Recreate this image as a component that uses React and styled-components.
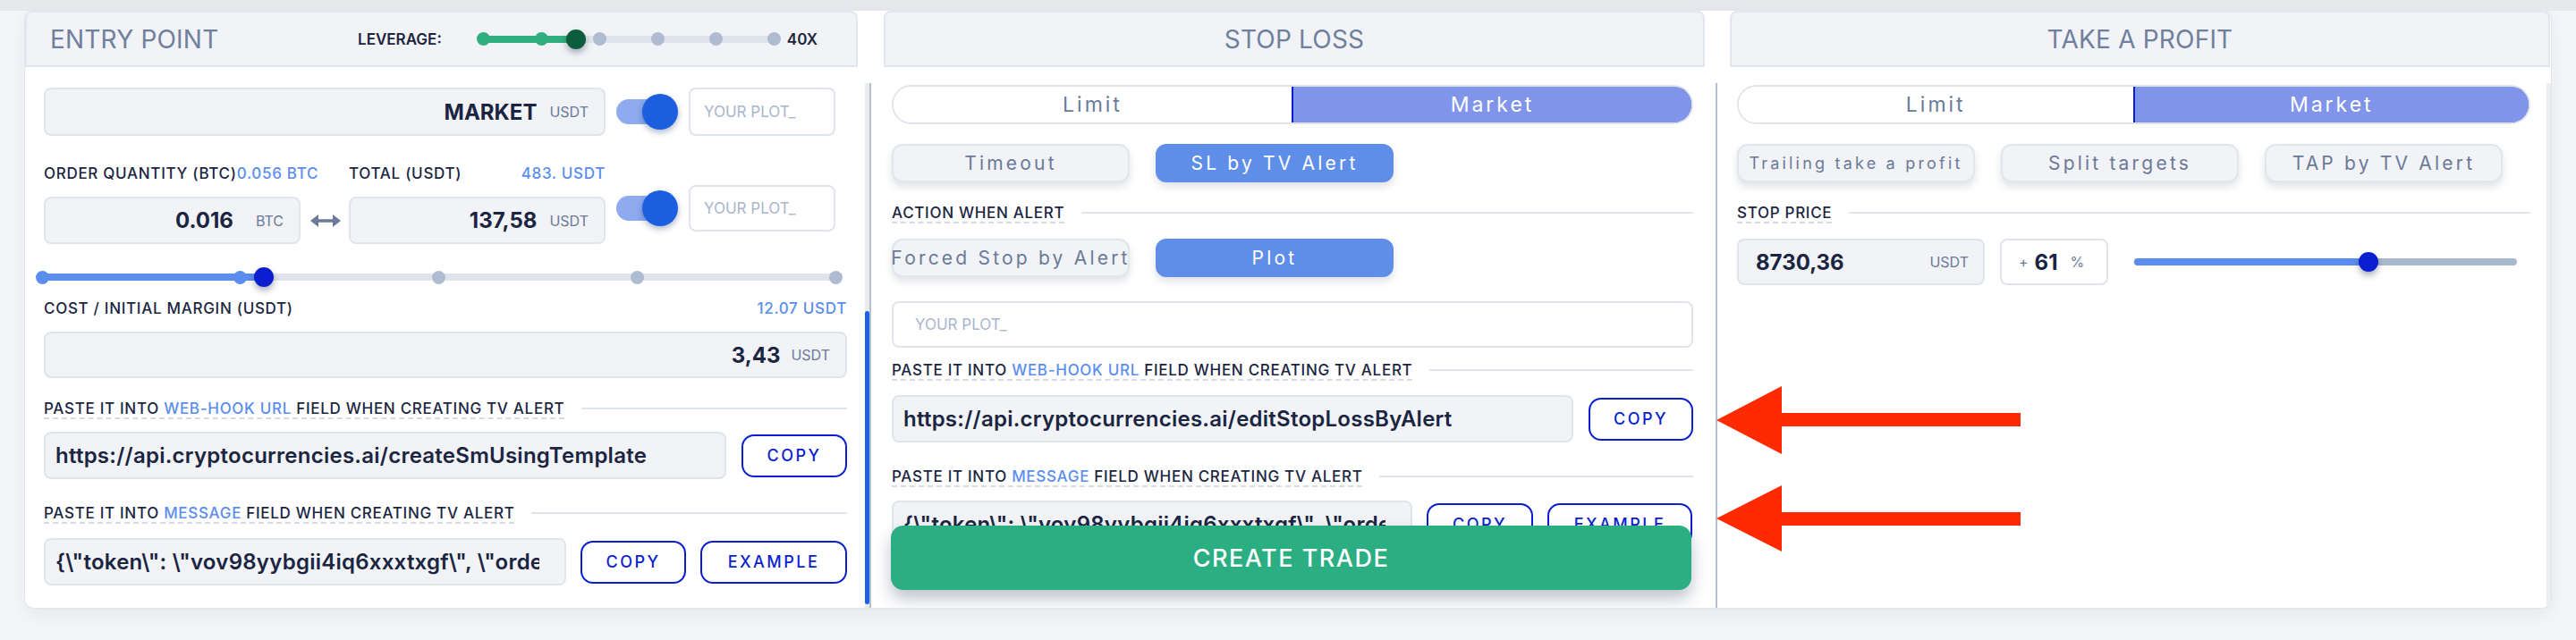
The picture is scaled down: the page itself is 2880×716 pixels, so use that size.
import React from 'react';
import styled, { createGlobalStyle } from 'styled-components';

const Global = createGlobalStyle`
  html, body { margin: 0; padding: 0; }
  body { font-family: Inter, "Noto Sans", Arial, sans-serif; background: #f3f4f7; }
  * { box-sizing: border-box; }
`;

const NAVY = '#1b2541';
const GRAY = '#6b7a99';
const LINK = '#5b8def';
const DEEP = '#0b1fd1';
const LINE = '#e0e4eb';
const FIELD = '#f1f3f6';

const Page = styled.div`
  position: relative;
  width: 2880px;
  height: 716px;
  overflow: hidden;
  padding: 12px 28px 0 28px;
  background: linear-gradient(#e6e8ec 0, #e6e8ec 12px, #f4f5f8 12px);
`;

const Card = styled.div`
  width: 2824px;
  height: 668px;
  display: grid;
  grid-template-columns: 944px 946px 934px;
  background: #fff;
  border-radius: 10px;
  box-shadow: 0 0 0 1px #e2e6ec, 0 8px 18px rgba(60, 70, 100, 0.07);
  overflow: hidden;
`;

const Column = styled.section`
  display: flex;
  flex-direction: column;
  min-width: 0;
  height: 100%;
`;

const Header = styled.header`
  flex: none;
  height: 63px;
  margin: 0 ${p => p.$mr}px 0 ${p => p.$ml}px;
  display: flex;
  align-items: center;
  justify-content: ${p => (p.$center ? 'center' : 'flex-start')};
  padding-left: ${p => (p.$center ? 0 : 26)}px;
  background: #f2f3f6;
  border: 2px solid #e2e6ed;
  border-radius: 8px 8px 0 0;
`;

const Title = styled.h2`
  margin: 0;
  font-size: 28px;
  font-weight: 400;
  color: #6f7f9e;
  letter-spacing: 0.2px;
`;

const Leverage = styled.div`
  margin-left: auto;
  margin-right: 43px;
  display: flex;
  align-items: center;
`;

const SmallStrong = styled.span`
  font-size: 17px;
  font-weight: 600;
  color: ${NAVY};
  margin: ${p => p.$m || 0};
`;

const Body = styled.div`
  position: relative;
  flex: 1;
  min-height: 0;
  margin-top: 18px;
  display: flex;
  border-left: ${p => (p.$border ? '2px solid #b7c0d0' : 'none')};
  overflow: hidden;
`;

const Content = styled.div`
  flex: 1;
  min-width: 0;
  display: flex;
  flex-direction: column;
  padding: ${p => p.$pad};
`;

const ScrollTrack = styled.div`
  flex: none;
  width: 5px;
  display: flex;
  flex-direction: column;
  background: ${p => p.$bg};
`;

const ScrollThumb = styled.div`
  margin-top: 255px;
  height: 328px;
  border-radius: 3px;
  background: #1f5fe3;
`;

const Row = styled.div`
  display: flex;
  align-items: ${p => p.$align || 'center'};
  gap: ${p => p.$gap ?? 12}px;
  margin-top: ${p => p.$mt || 0}px;
`;

const Stack = styled.div`
  display: flex;
  flex-direction: column;
  width: ${p => p.$w}px;
  flex: none;
`;

const Grid = styled.div`
  display: grid;
  grid-template-columns: 287px 54px 287px;
  align-items: center;
  margin-top: ${p => p.$mt || 0}px;
`;

const Field = styled.div`
  display: flex;
  align-items: center;
  justify-content: ${p => p.$justify || 'flex-end'};
  flex: none;
  width: ${p => (p.$w ? `${p.$w}px` : 'auto')};
  height: ${p => p.$h || 53}px;
  margin-top: ${p => p.$mt || 0}px;
  padding: 0 ${p => p.$pr ?? 18}px 0 ${p => p.$pl ?? 18}px;
  background: ${p => (p.$white ? '#fff' : FIELD)};
  border: 2px solid ${LINE};
  border-radius: 8px;
  overflow: hidden;
  white-space: nowrap;
`;

const Value = styled.span`
  font-size: 24px;
  font-weight: 700;
  color: ${NAVY};
`;

const Unit = styled.span`
  font-size: 16px;
  font-weight: 400;
  color: ${GRAY};
  margin-left: ${p => p.$ml ?? 14}px;
`;

const Placeholder = styled.span`
  font-size: 17px;
  color: #a9b6cc;
`;

const Code = styled.span`
  display: block;
  min-width: 0;
  overflow: hidden;
  text-overflow: clip;
  font-size: 24px;
  font-weight: 600;
  letter-spacing: 0.25px;
  color: ${NAVY};
`;

const Label = styled.span`
  font-size: 17px;
  line-height: 18px;
  font-weight: 500;
  letter-spacing: 0.7px;
  color: ${NAVY};
  white-space: nowrap;
`;

const Accent = styled.span`
  color: ${LINK};
`;

const LabelRow = styled.div`
  display: flex;
  justify-content: space-between;
  align-items: center;
  margin-top: ${p => p.$mt || 0}px;
`;

const SectionRow = styled.div`
  display: flex;
  align-items: flex-start;
  gap: 19px;
  margin-top: ${p => p.$mt || 0}px;
`;

const SectionLabel = styled.span`
  font-size: 17px;
  line-height: 18px;
  font-weight: 500;
  letter-spacing: 0.7px;
  color: ${NAVY};
  white-space: nowrap;
  padding-bottom: 1px;
  border-bottom: 2px dashed #d6dce6;
`;

const Rule = styled.div`
  flex: 1;
  height: 2px;
  margin-top: 8px;
  background: ${LINE};
`;

const OutlineButton = styled.button`
  flex: none;
  width: ${p => p.$w}px;
  height: 48px;
  padding: 0;
  background: #fff;
  border: 2px solid ${DEEP};
  border-radius: 14px;
  font-family: inherit;
  font-size: 18px;
  font-weight: 500;
  letter-spacing: 2.5px;
  color: ${DEEP};
`;

const Segment = styled.div`
  display: flex;
  height: 44px;
  border: 2px solid ${LINE};
  border-radius: 22px;
  overflow: hidden;
`;

const SegmentItem = styled.div`
  flex: 1;
  display: flex;
  align-items: center;
  justify-content: center;
  margin: ${p => (p.$active ? '-2px -2px -2px 0' : 0)};
  background: ${p => (p.$active ? '#8095ea' : '#fff')};
  border: ${p => (p.$active ? `2px solid ${DEEP}` : 'none')};
  border-radius: ${p => (p.$active ? '0 22px 22px 0' : 0)};
  font-size: 23px;
  letter-spacing: 3px;
  color: ${p => (p.$active ? '#fff' : GRAY)};
`;

const Options = styled.div`
  display: grid;
  grid-template-columns: repeat(3, 266px);
  column-gap: 29px;
  margin-top: ${p => p.$mt || 0}px;
`;

const Option = styled.div`
  height: 43px;
  display: flex;
  align-items: center;
  justify-content: center;
  white-space: nowrap;
  border-radius: 12px;
  background: ${p => (p.$active ? '#5f8ee8' : FIELD)};
  border: 2px solid ${p => (p.$active ? '#5f8ee8' : '#e1e5ec')};
  box-shadow: 0 5px 8px rgba(60, 72, 105, 0.16);
  font-size: ${p => (p.$small ? 18 : 21)}px;
  letter-spacing: 3.2px;
  color: ${p => (p.$active ? '#fff' : GRAY)};
`;

const SliderWrap = styled.div`
  position: relative;
  flex: none;
  width: ${p => p.$w}px;
  height: 22px;
  margin-left: ${p => p.$ml || 0}px;
  margin-top: ${p => p.$mt || 0}px;
`;

const SliderTrack = styled.div`
  position: absolute;
  left: 0;
  right: 0;
  top: 7px;
  height: 8px;
  border-radius: 4px;
  background: ${p => p.$c};
`;

const SliderFill = styled(SliderTrack)`
  right: auto;
`;

const SliderDot = styled.span`
  position: absolute;
  top: 3.5px;
  width: 15px;
  height: 15px;
  margin-left: -7.5px;
  border-radius: 50%;
  background: ${p => p.$c};
`;

const SliderKnob = styled.span`
  position: absolute;
  top: 0;
  width: 22px;
  height: 22px;
  margin-left: -11px;
  border-radius: 50%;
  background: ${p => p.$c};
  box-shadow: 0 4px 7px rgba(20, 30, 60, 0.35);
`;

const Slider = ({ width, value, stops = 0, fill, knob, track = '#dfe3eb', offDot = '#aebbd1', ml, mt }) => {
  const dots = stops ? Array.from({ length: stops }, (_, i) => i / (stops - 1)) : [];
  return (
    <SliderWrap $w={width} $ml={ml} $mt={mt}>
      <SliderTrack $c={track} />
      <SliderFill $c={fill} style={{ width: `${value * 100}%` }} />
      {dots.map((d, i) => (
        <SliderDot key={i} $c={d <= value ? fill : offDot} style={{ left: `${d * 100}%` }} />
      ))}
      <SliderKnob $c={knob} style={{ left: `${value * 100}%` }} />
    </SliderWrap>
  );
};

const ToggleWrap = styled.div`
  position: relative;
  flex: none;
  width: 69px;
  height: 40px;
`;

const ToggleTrack = styled.div`
  position: absolute;
  left: 0;
  top: 6px;
  width: 56px;
  height: 28px;
  border-radius: 14px;
  background: #8eabf0;
`;

const ToggleKnob = styled.div`
  position: absolute;
  right: 0;
  top: 0;
  width: 40px;
  height: 40px;
  border-radius: 50%;
  background: #1b5fe0;
  box-shadow: 0 3px 7px rgba(20, 40, 100, 0.35);
`;

const Toggle = () => (
  <ToggleWrap>
    <ToggleTrack />
    <ToggleKnob />
  </ToggleWrap>
);

const SwapIcon = styled.svg`
  justify-self: center;
  margin-left: 2px;
`;

const CreateTrade = styled.button`
  position: absolute;
  left: 22px;
  right: 27px;
  bottom: 20px;
  height: 72px;
  border: none;
  border-radius: 14px;
  background: #2bae82;
  box-shadow: 0 10px 18px rgba(40, 55, 90, 0.3);
  font-family: inherit;
  font-size: 27px;
  font-weight: 500;
  letter-spacing: 1.5px;
  color: #fff;
`;

const Arrows = styled.svg`
  position: absolute;
  left: 1919px;
  top: 430px;
`;

const Plus = styled.span`
  font-size: 16px;
  color: ${GRAY};
  margin-right: 7px;
`;

const WEBHOOK = (
  <>PASTE IT INTO <Accent>WEB-HOOK URL</Accent> FIELD WHEN CREATING TV ALERT</>
);
const MESSAGE = (
  <>PASTE IT INTO <Accent>MESSAGE</Accent> FIELD WHEN CREATING TV ALERT</>
);
const MSG_TEXT = '{\\"token\\": \\"vov98yybgii4iq6xxxtxgf\\", \\"orde';

export default function App() {
  return (
    <>
      <Global />
      <Page>
        <Card>
          {/* ENTRY POINT */}
          <Column>
            <Header $ml={0} $mr={13}>
              <Title>ENTRY POINT</Title>
              <Leverage>
                <SmallStrong $m="0 47px 0 0">LEVERAGE:</SmallStrong>
                <Slider width={325} value={0.317} stops={6} fill="#2fae7f" knob="#0b5d3e" />
                <SmallStrong $m="0 0 0 14px">40X</SmallStrong>
              </Leverage>
            </Header>
            <Body>
              <Content $pad="5px 20px 0 21px">
                <Row $gap={12}>
                  <Field $w={628} $h={54} $pr={17}>
                    <Value>MARKET</Value>
                    <Unit>USDT</Unit>
                  </Field>
                  <Toggle />
                  <Field $w={164} $h={54} $white $justify="flex-start" $pl={15}>
                    <Placeholder>YOUR PLOT_</Placeholder>
                  </Field>
                </Row>

                <Row $gap={12} $mt={33}>
                  <Stack $w={628}>
                    <Grid>
                      <Label>
                        ORDER QUANTITY (BTC)<Accent>0.056 BTC</Accent>
                      </Label>
                      <span />
                      <LabelRow>
                        <Label>TOTAL (USDT)</Label>
                        <Label><Accent>483. USDT</Accent></Label>
                      </LabelRow>
                    </Grid>
                    <Grid $mt={17}>
                      <Field $pr={17}>
                        <Value>0.016</Value>
                        <Unit $ml={25}>BTC</Unit>
                      </Field>
                      <SwapIcon width="36" height="18" viewBox="0 0 36 18">
                        <path d="M7 9 H29" stroke="#6b7a99" strokeWidth="3.5" />
                        <path d="M1 9 L10 2 L10 16 Z" fill="#6b7a99" />
                        <path d="M35 9 L26 2 L26 16 Z" fill="#6b7a99" />
                      </SwapIcon>
                      <Field $pr={17}>
                        <Value>137,58</Value>
                        <Unit>USDT</Unit>
                      </Field>
                    </Grid>
                  </Stack>
                  <Row $gap={12} $mt={8}>
                    <Toggle />
                    <Field $w={164} $h={52} $white $justify="flex-start" $pl={15}>
                      <Placeholder>YOUR PLOT_</Placeholder>
                    </Field>
                  </Row>
                </Row>

                <Slider width={887} value={0.28} stops={5} fill="#5b8def" knob={DEEP} ml={-2} mt={26} />

                <LabelRow $mt={15}>
                  <Label>COST / INITIAL MARGIN (USDT)</Label>
                  <Label><Accent>12.07 USDT</Accent></Label>
                </LabelRow>
                <Field $h={52} $mt={17} $pr={17}>
                  <Value>3,43</Value>
                  <Unit $ml={12}>USDT</Unit>
                </Field>

                <SectionRow $mt={25}>
                  <SectionLabel>{WEBHOOK}</SectionLabel>
                  <Rule />
                </SectionRow>
                <Row $gap={17} $mt={14}>
                  <Field $w={763} $justify="flex-start" $pl={11}>
                    <Code>https://api.cryptocurrencies.ai/createSmUsingTemplate</Code>
                  </Field>
                  <OutlineButton $w={118}>COPY</OutlineButton>
                </Row>

                <SectionRow $mt={29}>
                  <SectionLabel>{MESSAGE}</SectionLabel>
                  <Rule />
                </SectionRow>
                <Row $gap={16} $mt={16}>
                  <Field $w={584} $justify="flex-start" $pl={11} $pr={28}>
                    <Code>{MSG_TEXT}</Code>
                  </Field>
                  <OutlineButton $w={118}>COPY</OutlineButton>
                  <OutlineButton $w={164}>EXAMPLE</OutlineButton>
                </Row>
              </Content>
              <ScrollTrack $bg="#e9ecf1">
                <ScrollThumb />
              </ScrollTrack>
            </Body>
          </Column>

          {/* STOP LOSS */}
          <Column>
            <Header $ml={16} $mr={12} $center>
              <Title>STOP LOSS</Title>
            </Header>
            <Body $border>
              <Content $pad="2px 25px 0 23px">
                <Segment>
                  <SegmentItem>Limit</SegmentItem>
                  <SegmentItem $active>Market</SegmentItem>
                </Segment>
                <Options $mt={22}>
                  <Option>Timeout</Option>
                  <Option $active>SL by TV Alert</Option>
                </Options>
                <SectionRow $mt={25}>
                  <SectionLabel>ACTION WHEN ALERT</SectionLabel>
                  <Rule />
                </SectionRow>
                <Options $mt={17}>
                  <Option>Forced Stop by Alert</Option>
                  <Option $active>Plot</Option>
                </Options>
                <Field $h={52} $mt={27} $white $justify="flex-start" $pl={24}>
                  <Placeholder>YOUR PLOT_</Placeholder>
                </Field>
                <SectionRow $mt={16}>
                  <SectionLabel>{WEBHOOK}</SectionLabel>
                  <Rule />
                </SectionRow>
                <Row $gap={17} $mt={16}>
                  <Field $w={762} $justify="flex-start" $pl={11}>
                    <Code>https://api.cryptocurrencies.ai/editStopLossByAlert</Code>
                  </Field>
                  <OutlineButton $w={117}>COPY</OutlineButton>
                </Row>
                <SectionRow $mt={29}>
                  <SectionLabel>{MESSAGE}</SectionLabel>
                  <Rule />
                </SectionRow>
                <Row $gap={16} $mt={15}>
                  <Field $w={582} $justify="flex-start" $pl={11} $pr={28}>
                    <Code>{MSG_TEXT}</Code>
                  </Field>
                  <OutlineButton $w={119}>COPY</OutlineButton>
                  <OutlineButton $w={162}>EXAMPLE</OutlineButton>
                </Row>
              </Content>
              <CreateTrade>CREATE TRADE</CreateTrade>
            </Body>
          </Column>

          {/* TAKE A PROFIT */}
          <Column>
            <Header $ml={16} $mr={1} $center>
              <Title>TAKE A PROFIT</Title>
            </Header>
            <Body $border>
              <Content $pad="2px 18px 0 22px">
                <Segment>
                  <SegmentItem>Limit</SegmentItem>
                  <SegmentItem $active>Market</SegmentItem>
                </Segment>
                <Options $mt={22}>
                  <Option $small>Trailing take a profit</Option>
                  <Option>Split targets</Option>
                  <Option>TAP by TV Alert</Option>
                </Options>
                <SectionRow $mt={25}>
                  <SectionLabel>STOP PRICE</SectionLabel>
                  <Rule />
                </SectionRow>
                <Row $gap={17} $mt={17}>
                  <Field $w={277} $h={52} $justify="space-between" $pl={19} $pr={16}>
                    <Value>8730,36</Value>
                    <Unit>USDT</Unit>
                  </Field>
                  <Field $w={121} $h={52} $white $justify="flex-start" $pl={19}>
                    <Plus>+</Plus>
                    <Value>61</Value>
                    <Unit>%</Unit>
                  </Field>
                  <Slider width={428} value={0.612} fill="#5b8def" knob={DEEP} track="#aab8cf" ml={12} />
                </Row>
              </Content>
              <ScrollTrack $bg="#eceef2" />
            </Body>
          </Column>
        </Card>

        <Arrows width="341" height="190" viewBox="0 0 341 190">
          <polygon points="0,40 73,2 73,32 340,32 340,47 73,47 73,78" fill="#ff2a00" />
          <polygon points="0,150 73,113 73,143 340,143 340,158 73,158 73,187" fill="#ff2a00" />
        </Arrows>
      </Page>
    </>
  );
}
